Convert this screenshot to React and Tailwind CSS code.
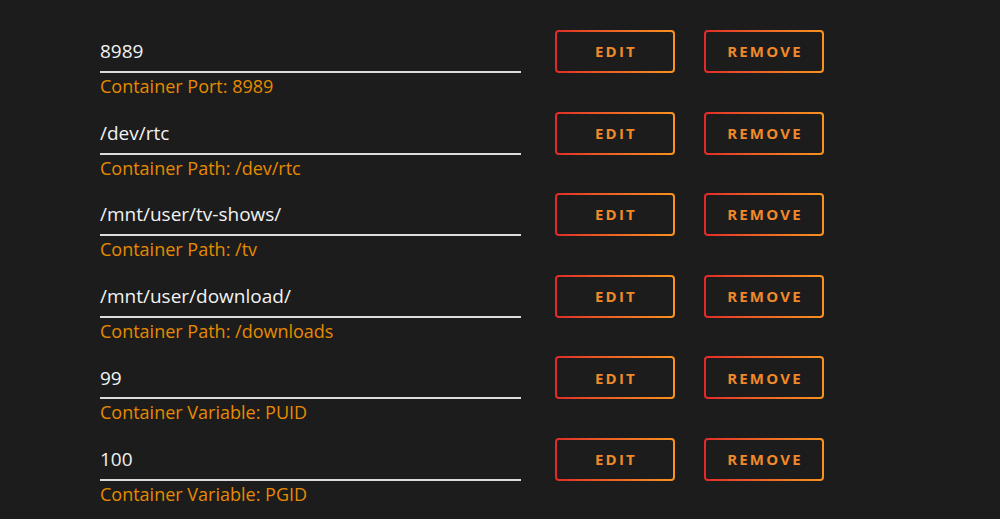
const rows = [
  { value: '8989', label: 'Container Port: 8989' },
  { value: '/dev/rtc', label: 'Container Path: /dev/rtc' },
  { value: '/mnt/user/tv-shows/', label: 'Container Path: /tv' },
  { value: '/mnt/user/download/', label: 'Container Path: /downloads' },
  { value: '99', label: 'Container Variable: PUID' },
  { value: '100', label: 'Container Variable: PGID' },
]

function GradientButton({ children }) {
  return (
    <button className="w-[120px] h-[43px] rounded-[4px] p-[2px] bg-gradient-to-r from-[#e22828] to-[#f7931e]">
      <span className="flex h-full w-full items-center justify-center rounded-[2px] bg-[#1c1c1c] text-[15px] font-bold tracking-[2.2px] text-[#f0892a] pl-[2px]">
        {children}
      </span>
    </button>
  )
}

export default function App() {
  return (
    <div className="min-h-screen bg-[#1c1c1c] pt-[30px] pl-[100px]" style={{ fontFamily: '"Open Sans", "Noto Sans", sans-serif' }}>
      <div className="flex flex-col gap-[13.6px]">
        {rows.map((row) => (
          <div key={row.value} className="flex items-start">
            <div className="w-[421px]">
              <div className="h-[43px] flex items-center border-b-2 border-[#dcdcdc] text-[19px] text-[#f2f2f2] pt-[2px]">
                {row.value}
              </div>
              <div className="mt-[1px] leading-6 text-[18px] text-[#e68a00]">{row.label}</div>
            </div>
            <div className="ml-[34px] flex gap-[29px]">
              <GradientButton>EDIT</GradientButton>
              <GradientButton>REMOVE</GradientButton>
            </div>
          </div>
        ))}
      </div>
    </div>
  )
}
